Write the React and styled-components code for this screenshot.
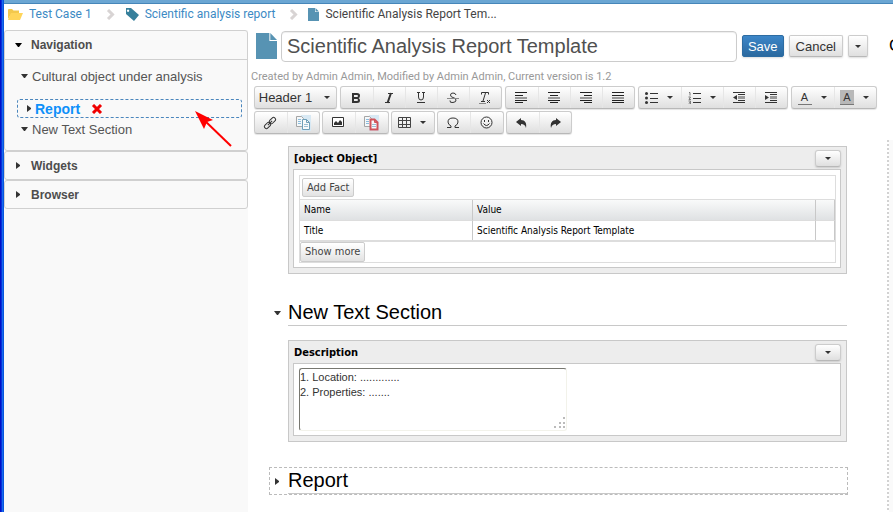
import React from "react";
import styled, { createGlobalStyle, css } from "styled-components";

const SANS = '"Liberation Sans", Arial, sans-serif';
const COND = '"DejaVu Sans Condensed", "DejaVu Sans", Tahoma, sans-serif';
const CRUMB = 'Roboto, "Liberation Sans", sans-serif';

const GlobalStyle = createGlobalStyle`
  * { box-sizing: border-box; }
  body { margin: 0; background: #fff; font-family: ${SANS}; font-size: 12px; color: #333; }
  button, input, textarea, select { font-family: inherit; }
`;

const glossy = css`
  background: linear-gradient(#fff, #dfdfdf);
  border: 1px solid #ccc;
  border-bottom-color: #b8b8b8;
`;

const Frame = styled.div`
  height: 100vh;
  overflow: hidden;
  display: grid;
  grid-template-columns: 4px minmax(0, 1fr);
  grid-template-rows: 4px minmax(0, 1fr);
`;

const TopEdge = styled.div`
  grid-column: 2;
  grid-row: 1;
  background: #6ba6d3;
  border-bottom: 1px solid #4686b9;
`;

const LeftEdge = styled.div`
  grid-column: 1;
  grid-row: 1 / 3;
  background: linear-gradient(90deg, #0010c8 0 1px, #0831d9 1px 2px, #166aee 2px 3px, #0855dd 3px 4px);
`;

const Page = styled.div`
  grid-column: 2;
  grid-row: 2;
  min-height: 0;
  display: flex;
  flex-direction: column;
`;

const Crumbs = styled.nav`
  flex: none;
  display: flex;
  align-items: center;
  height: 26px;
  padding: 0 3px 6px;
  font-family: ${CRUMB};
  font-size: 12px;
  line-height: 20px;
  white-space: nowrap;
`;

const Crumb = styled.span`
  display: flex;
  align-items: center;
  gap: 6px;
  color: #444;
  a { color: #3c8ac4; text-decoration: none; }
`;

const CrumbGap = styled.span`
  display: flex;
  padding: 0 10px 0 14px;
`;

const Columns = styled.div`
  flex: 1;
  min-height: 0;
  display: grid;
  grid-template-columns: 244px minmax(0, 1fr);
`;

const Sidebar = styled.aside`
  background: #f9f9f9;
`;

const Section = styled.section`
  border: 1px solid #d0d0d0;
  border-radius: 3px;
`;

const SectionHead = styled.button`
  display: flex;
  align-items: center;
  gap: 9px;
  width: 100%;
  height: ${(p) => (p.$open ? 28 : 27)}px;
  padding: 0 10px;
  border: 0;
  background: none;
  font-size: 12px;
  font-weight: 700;
  color: #4d4d4d;
  svg { width: 7px; }
`;

const Tree = styled.div`
  height: 91px;
  border-top: 1px solid #d0d0d0;
  padding: 6px 5px 0 12px;
  font-size: 13px;
  color: #555;
`;

const TreeItem = styled.div`
  display: flex;
  align-items: center;
  gap: 4px;
  height: 20px;
  padding-left: 4px;
  white-space: nowrap;
`;

const DragItem = styled(TreeItem)`
  position: relative;
  height: 19px;
  margin-top: 13px;
  margin-bottom: 1px;
  padding-left: 8px;
  border: 1px dashed #4a86bd;
  border-radius: 3px;
  font-size: 14px;
  font-weight: 700;
  color: #0e90fa;
`;

const RemoveButton = styled.button`
  display: flex;
  margin-left: 7px;
  padding: 0;
  border: 0;
  background: none;
`;

const Pointer = styled.svg`
  position: absolute;
  left: 176px;
  top: 10px;
`;

const Main = styled.main`
  min-width: 0;
  display: flex;
  flex-direction: column;
  min-height: 0;
`;

const TitleRow = styled.div`
  display: flex;
  align-items: center;
  height: 32px;
  padding-left: 8px;
  > svg { flex: none; margin-right: 4px; }
`;

const TitleInput = styled.input`
  flex: 1;
  min-width: 0;
  height: 31px;
  margin-right: 5px;
  padding: 0 5px;
  border: 1px solid #ccc;
  border-radius: 4px;
  font-size: 20px;
  color: #505050;
  box-shadow: inset 0 1px 1px #eee;
`;

const Button = styled.button`
  ${glossy}
  display: flex;
  align-items: center;
  justify-content: center;
  height: 22px;
  margin-right: 5px;
  padding: 0 6px;
  border-radius: 2px;
  font-size: 13px;
  color: #333;
  box-shadow: 0 1px 2px #ddd;
  ${(p) => p.$primary && css`
    padding: 0 5px;
    background: linear-gradient(#3c86c8, #2b699f);
    border-color: #2d6ca2;
    color: #fff;
  `}
`;

const Overflow = styled.div`
  width: 4px;
  margin-left: 16px;
  overflow: hidden;
  white-space: nowrap;
  font-size: 17px;
  color: #000;
`;

const Meta = styled.p`
  margin: 7px 0 2px 3px;
  font-family: ${CRUMB};
  font-size: 11px;
  line-height: 15px;
  color: #999;
`;

const Toolbar = styled.div`
  display: flex;
  gap: ${(p) => p.$gap}px;
  height: 25px;
  padding-left: 6px;
`;

const Group = styled.div`
  ${glossy}
  display: flex;
  height: 23px;
  border-radius: 3px;
  overflow: hidden;
  box-shadow: 0 1px 1px #e4e4e4;
`;

const Tool = styled.button`
  display: flex;
  align-items: center;
  justify-content: center;
  gap: ${(p) => (p.$wide ? 12 : 9)}px;
  width: ${(p) => p.$w || 32}px;
  padding: 0 2px 0 0;
  border: 0;
  background: none;
  font-size: ${(p) => (p.$wide ? 13 : 12)}px;
  color: #333;
  & + & { border-left: 1px solid #e6e6e6; }
`;

const Swatch = styled.span`
  width: 14px;
  height: 15px;
  line-height: 14px;
  border-bottom: 1px solid #777;
  font-size: 11px;
  background: ${(p) => p.$fill || "transparent"};
`;

const Body = styled.div`
  flex: 1;
  min-height: 0;
  display: grid;
  grid-template-columns: minmax(0, 1fr) 2px 4px;
  margin-top: 4px;
`;

const Splitter = styled.div`
  background: repeating-linear-gradient(#d2d2d2 0 2px, #fff 2px 4px);
`;

const Gutter = styled.div`
  background: #fafafa;
`;

const Doc = styled.div`
  padding: 6px 40px 0 22px;
`;

const Panel = styled.section`
  margin-left: 18px;
  border: 1px solid #c8c8c8;
  background: #ededed;
  padding: 0 5px 5px 4px;
  font-family: ${COND};
`;

const PanelHead = styled.header`
  display: flex;
  align-items: center;
  justify-content: space-between;
  height: 22px;
  padding-left: 1px;
  font-size: 11px;
  font-weight: 700;
  color: #000;
`;

const PanelMenu = styled.button`
  ${glossy}
  display: flex;
  align-items: center;
  justify-content: center;
  width: 26px;
  height: 17px;
  padding: 0;
  border-radius: 3px;
  box-shadow: 0 1px 2px #ccc;
`;

const PanelBody = styled.div`
  border: 1px solid #c8c8c8;
  background: #fff;
  padding: ${(p) => p.$pad};
`;

const FactBox = styled.div`
  border: 1px solid #ddd;
`;

const FactButton = styled.button`
  display: block;
  height: ${(p) => (p.$top ? 19 : 20)}px;
  margin: ${(p) => (p.$top ? "2px" : "0")};
  padding: 0 4px;
  border: 1px solid #ccc;
  border-radius: 2px;
  background: linear-gradient(#fff, #f2f2f2 50%, #e2e2e2);
  font-size: 11px;
  line-height: 16px;
  color: #444;
`;

const Facts = styled.table`
  width: 100%;
  table-layout: fixed;
  border-collapse: separate;
  border-spacing: 0;
  font-size: 10px;
  line-height: 12px;
  color: #000;
  border-top: 1px solid #ddd;
  border-bottom: 2px solid #ddd;
  th, td {
    height: 19px;
    padding: 0 4px;
    text-align: left;
    font-weight: 400;
    border-right: 1px solid #c8c8c8;
  }
  th {
    height: 21px;
    background: linear-gradient(#f9fafa, #dfe1e3);
    border-bottom: 1px solid #ddd;
  }
  th:last-child { width: 19px; }
  th:first-child { width: 173px; }
`;

const Heading = styled.div`
  display: flex;
  align-items: center;
  gap: 5px;
  height: 26px;
  padding-left: 4px;
  margin: ${(p) => p.$margin};
  outline: ${(p) => (p.$dragging ? "1px dashed #bbb" : "none")};
  > svg { width: 7px; flex: none; }
  h2 {
    flex: 1;
    margin: 0 0 0 2px;
    font-size: 20px;
    font-weight: 400;
    line-height: 25px;
    color: #000;
    border-bottom: 1px solid #c8c8c8;
  }
`;

const NotesBox = styled.div`
  position: relative;
  width: 268px;
  max-width: 100%;
`;

const Notes = styled.textarea`
  display: block;
  width: 100%;
  height: 63px;
  padding: 1px 0 0;
  border: 1px solid #f2f2ea;
  border-top-color: #777770;
  border-left-color: #777770;
  border-radius: 3px;
  resize: none;
  font-family: ${SANS};
  font-size: 11px;
  line-height: 15px;
  color: #333;
`;

const Grip = styled.svg`
  position: absolute;
  right: 1px;
  bottom: 2px;
`;

const Down = ({ c = "#333" }) => (
  <svg width="7" height="4" viewBox="0 0 7 4" aria-hidden="true"><path d="M0 0h7L4 4H3z" fill={c} /></svg>
);
const Caret = () => (
  <svg width="6" height="3" viewBox="0 0 6 3" aria-hidden="true"><path d="M0 0h6L3 3z" fill="#333" /></svg>
);
const Right = () => (
  <svg width="5" height="7" viewBox="0 0 5 7" preserveAspectRatio="xMinYMid meet" aria-hidden="true"><path d="M1 0l4 3v1L1 7z" fill="#333" /></svg>
);
const FileIcon = ({ w, h }) => (
  <svg width={w} height={h} viewBox="0 0 22 26" preserveAspectRatio="none" aria-hidden="true">
    <path d="M0 0h14v8h8v18H0z" fill="#5793b3" />
    <path d="M15 0l7 7h-7z" fill="#5793b3" />
  </svg>
);
const Chevron = () => (
  <svg width="9" height="11" viewBox="0 0 9 11" aria-hidden="true"><path d="M2 1l4.500 4.500L2 10" fill="none" stroke="#d8d4d4" strokeWidth="3" /></svg>
);
const I = ({ children, w = 16, h = 16 }) => (
  <svg width={w} height={h} viewBox={`0 0 ${w} ${h}`} fill="none" stroke="#333" aria-hidden="true">{children}</svg>
);
const AlignIcon = ({ rows }) => (
  <I w={12} h={12}>
    {rows.map(([x, w], i) => <rect key={i} x={x} y={[0, 3, 5, 8, 10][i]} width={w} height={i === 2 ? 2 : 1} fill={i === 2 ? "#999" : "#222"} stroke="none" />)}
  </I>
);
const IndentIcon = ({ out }) => (
  <I w={14} h={11}>
    <path d="M1 .5h12M6 2.500h7M6 8.500h7M1 10.500h12" />
    <path d="M6 5.500h7" stroke="#999" strokeWidth="3" />
    <path d={out ? "M5 3v5L1 5.500z" : "M1 3v5l4-2.500z"} fill="#333" stroke="none" />
  </I>
);
const CopyIcon = ({ accent, bold }) => (
  <I w={16} h={16}>
    <path d="M6 0h10v16H6z" fill="#d8e9f4" stroke="none" />
    <path d="M1.500 1.500h5l2 2v8h-7z" fill="#f4f8fa" stroke="#a5a5a5" />
    <path d="M3 4.500h3M3 6.500h3M3 8.500h3" stroke="#8bbcdc" />
    <path d="M7.500 4.500h4l3 3v7h-7z" fill="#f8fafb" stroke={accent} strokeWidth={bold ? 2 : 1} />
    <path d="M11.500 4.500v3h3" stroke={accent} />
    <path d="M9 9.500h4M9 11.500h4" stroke="#9cbfd4" />
  </I>
);
const ArrowIcon = ({ flip }) => (
  <I w={12} h={10}>
    <path transform={flip ? "translate(12 0) scale(-1 1)" : undefined} d="M0 4L5 0v2c4 0 6 3 5 8C9 7 8 6 5 6v2z" fill="#333" stroke="none" />
  </I>
);

const Head = ({ open, children }) => (
  <SectionHead type="button" $open={open} aria-expanded={!!open}>{open ? <Down c="#000" /> : <Right />}{children}</SectionHead>
);
const PanelTop = ({ children }) => (
  <PanelHead>{children}<PanelMenu type="button" aria-label="Panel menu"><Caret /></PanelMenu></PanelHead>
);

export default function App() {
  return (
    <Frame>
      <GlobalStyle />
      <LeftEdge />
      <TopEdge />
      <Page>
        <Crumbs aria-label="Breadcrumb">
          <Crumb>
            <svg width="16" height="12" viewBox="0 0 16 12" aria-hidden="true">
              <path d="M1 11V2q0-1 1-1h3l1.500 1.500H12V5H5z" fill="#f3c84c" />
              <path d="M4 5h12l-3 7H1z" fill="#ffd55a" />
            </svg>
            <a href="#case">Test Case 1</a>
          </Crumb>
          <CrumbGap><Chevron /></CrumbGap>
          <Crumb>
            <svg width="14" height="13" viewBox="0 0 14 13" aria-hidden="true">
              <path fillRule="evenodd" d="M1 0h5l8 7-5 6-8-7zM3 1.500a1.200 1.200 0 1 0 .1 0z" fill="#37809c" />
            </svg>
            <a href="#report">Scientific analysis report</a>
          </Crumb>
          <CrumbGap><Chevron /></CrumbGap>
          <Crumb><FileIcon w={11} h={13} />Scientific Analysis Report Tem...</Crumb>
        </Crumbs>
        <Columns>
          <Sidebar>
            <Section>
              <Head open>Navigation</Head>
              <Tree>
                <TreeItem><Down />Cultural object under analysis</TreeItem>
                <DragItem>
                  <Right />Report
                  <RemoveButton type="button" aria-label="Remove Report">
                    <svg width="12" height="10" viewBox="0 0 12 10" aria-hidden="true"><path d="M2 1l8 8M10 1L2 9" stroke="#f00000" strokeWidth="3" /></svg>
                  </RemoveButton>
                  <Pointer width="40" height="38" viewBox="0 0 40 38" aria-hidden="true">
                    <path d="M9 9l28 27" stroke="#f00" strokeWidth="2" />
                    <path d="M1 1l18 9-6 2-3 7z" fill="#f00" />
                  </Pointer>
                </DragItem>
                <TreeItem><Down />New Text Section</TreeItem>
              </Tree>
            </Section>
            <Section><Head>Widgets</Head></Section>
            <Section><Head>Browser</Head></Section>
          </Sidebar>
          <Main>
            <TitleRow>
              <FileIcon w={21} h={26} />
              <TitleInput aria-label="Title" defaultValue="Scientific Analysis Report Template" />
              <Button type="button" $primary>Save</Button>
              <Button type="button">Cancel</Button>
              <Button type="button" aria-label="More actions"><Caret /></Button>
              <Overflow>C</Overflow>
            </TitleRow>
            <Meta>Created by Admin Admin, Modified by Admin Admin, Current version is 1.2</Meta>
            <Toolbar $gap={3}>
              <Group>
                <Tool $w={81} $wide type="button">Header 1 <Caret /></Tool>
              </Group>
              <Group>
                <Tool type="button" aria-label="Bold"><I w={10} h={12}><path fillRule="evenodd" d="M1 1h5q3 0 3 2.500T7.500 6Q9 6.500 9 8.500 9 11 6 11H1zM3 3v2h3q1 0 1-1T6 3zM3 7v2h3q1 0 1-1T6 7z" fill="#333" stroke="none" /></I></Tool>
                <Tool type="button" aria-label="Italic"><I w={10} h={12}><path d="M4 1.500h5M1 10.500h5" /><path d="M7 1L3.500 11" strokeWidth="2" /></I></Tool>
                <Tool type="button" aria-label="Underline"><I w={10} h={12}><path d="M1 .5h3M6 .5h3M2.500 1v4q0 3 2.500 3t2.500-3V1M1 10.500h8" /></I></Tool>
                <Tool type="button" aria-label="Strikethrough"><I w={12} h={12}><path d="M9 3Q8.500 1 6 1 3.500 1 3.500 3T6 5.500 9 8 6 10.500 3 8.500" /><path d="M0 6.500h12" stroke="#888" /></I></Tool>
                <Tool type="button" aria-label="Clear formatting"><I w={12} h={12}><path d="M2.500 2.500V.5h7v2M6.500 1L4 9M2 9.500h4M8 8l3 3M11 8l-3 3" /><path d="M0 11.500h7" stroke="#888" /></I></Tool>
              </Group>
              <Group>
                <Tool type="button" aria-label="Align left"><AlignIcon rows={[[0, 12], [0, 8], [0, 12], [0, 12], [0, 8]]} /></Tool>
                <Tool type="button" aria-label="Align center"><AlignIcon rows={[[0, 12], [2, 8], [0, 12], [0, 12], [2, 8]]} /></Tool>
                <Tool type="button" aria-label="Align right"><AlignIcon rows={[[0, 12], [4, 8], [0, 12], [0, 12], [4, 8]]} /></Tool>
                <Tool type="button" aria-label="Justify"><AlignIcon rows={[[0, 12], [0, 12], [0, 12], [0, 12], [0, 12]]} /></Tool>
              </Group>
              <Group>
                <Tool $w={42} type="button" aria-label="Bulleted list"><I w={13} h={12}><path d="M5 1.500h8M5 6.500h8M5 10.500h8" /><circle cx="1.500" cy="1.500" r="1.500" fill="#333" stroke="none" /><circle cx="1.500" cy="6" r="1.500" fill="#333" stroke="none" /><circle cx="1.500" cy="10.500" r="1.500" fill="#333" stroke="none" /></I><Caret /></Tool>
                <Tool $w={42} type="button" aria-label="Numbered list"><I w={13} h={12}><path d="M5 1.500h8M5 6.500h8M5 10.500h8" /><path d="M1 .5h1v3M.5 5h2L1 7.500h2M.5 9h2v1.500h-1 1V12h-2" stroke="#777" /></I><Caret /></Tool>
                <Tool type="button" aria-label="Decrease indent"><IndentIcon out /></Tool>
                <Tool type="button" aria-label="Increase indent"><IndentIcon /></Tool>
              </Group>
              <Group>
                <Tool $w={42} type="button" aria-label="Text color"><Swatch>A</Swatch><Caret /></Tool>
                <Tool $w={42} type="button" aria-label="Background color"><Swatch $fill="#b8b8b8">A</Swatch><Caret /></Tool>
              </Group>
            </Toolbar>
            <Toolbar $gap={2}>
              <Group>
                <Tool type="button" aria-label="Link"><I w={14} h={14}><g transform="rotate(-45 7 7)"><rect x="0" y="5" width="7" height="4" rx="2" /><rect x="7" y="5" width="7" height="4" rx="2" /><path d="M4 7h6" /></g></I></Tool>
                <Tool type="button" aria-label="Copy page"><CopyIcon accent="#6f9fb8" /></Tool>
              </Group>
              <Group>
                <Tool type="button" aria-label="Image"><I w={12} h={11}><path d="M.5.5h11v9H.5z" fill="#fff" /><path d="M2 8V6l2-2 2 2 2-3 2 2v3z" fill="#333" stroke="none" /></I></Tool>
                <Tool $w={33} type="button" aria-label="Paste page"><CopyIcon accent="#d0545a" bold /></Tool>
              </Group>
              <Group>
                <Tool $w={42} type="button" aria-label="Table"><I w={13} h={12}><path d="M.5.5h12v10H.5zM4.500 0v11M8.500 0v11M0 3.500h13M0 7.500h13" stroke="#444" /></I><Caret /></Tool>
              </Group>
              <Group>
                <Tool type="button" aria-label="Special character"><I w={14} h={12}><path d="M1 10.500h4V9Q2 7.500 2 5 2 1 7 1t5 4q0 2.500-3 4v1.500h4" /></I></Tool>
                <Tool $w={33} type="button" aria-label="Smiley"><I w={13} h={13}><circle cx="6.500" cy="6.500" r="5.500" /><path d="M3.500 7.500q3 4 6 0M4.500 4v2M8.500 4v2" /></I></Tool>
              </Group>
              <Group>
                <Tool type="button" aria-label="Undo"><ArrowIcon /></Tool>
                <Tool type="button" aria-label="Redo"><ArrowIcon flip /></Tool>
              </Group>
            </Toolbar>
            <Body>
              <Doc>
                <Panel>
                  <PanelTop>[object Object]</PanelTop>
                  <PanelBody $pad="5px 4px 4px 5px">
                    <FactBox>
                      <FactButton type="button" $top>Add Fact</FactButton>
                      <Facts>
                        <thead><tr><th>Name</th><th>Value</th><th aria-label="Actions" /></tr></thead>
                        <tbody><tr><td>Title</td><td>Scientific Analysis Report Template</td><td /></tr></tbody>
                      </Facts>
                      <FactButton type="button">Show more</FactButton>
                    </FactBox>
                  </PanelBody>
                </Panel>
                <Heading $margin="26px 0 14px"><Down /><h2>New Text Section</h2></Heading>
                <Panel>
                  <PanelTop>Description</PanelTop>
                  <PanelBody $pad="4px 5px">
                    <NotesBox>
                      <Notes aria-label="Description" defaultValue={"1. Location: .............\n2. Properties: ......."} />
                      <Grip width="12" height="12" viewBox="0 0 12 12" fill="#bbb" aria-hidden="true">
                        <path d="M9 0h2v2H9zM5 5h2v2H5zM9 5h2v2H9zM0 9h2v2H0zM5 9h2v2H5zM9 9h2v2H9z" />
                      </Grip>
                    </NotesBox>
                  </PanelBody>
                </Panel>
                <Heading $dragging $margin="26px 0 0"><Right /><h2>Report</h2></Heading>
              </Doc>
              <Splitter />
              <Gutter />
            </Body>
          </Main>
        </Columns>
      </Page>
    </Frame>
  );
}
